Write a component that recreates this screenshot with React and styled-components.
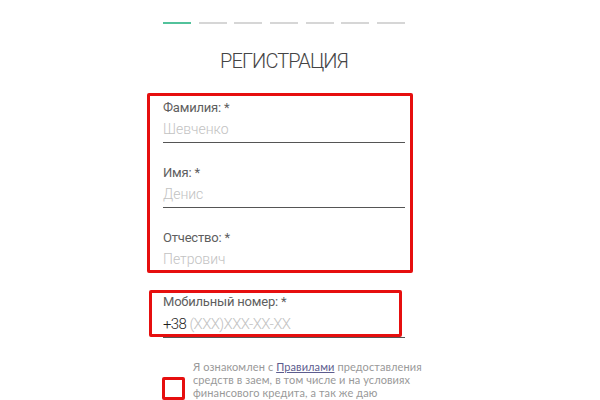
import styled, { createGlobalStyle } from "styled-components";

const GlobalStyle = createGlobalStyle`
    html, body {
        margin: 0;
        padding: 0;
        background: #ffffff;
    }
    body {
        font-family: Roboto, "Liberation Sans", sans-serif;
        overflow: hidden;
    }
`;

const Page = styled.div`
    width: 600px;
    height: 400px;
    overflow: hidden;
    background: #ffffff;
`;

const Column = styled.div`
    width: 242px;
    margin-left: 163px;
    padding-top: 22px;
`;

// progress of the registration steps
const Steps = styled.div`
    display: flex;
    justify-content: space-between;
`;

const Step = styled.span`
    width: 28px;
    height: 2px;
    background-color: ${props => props.$active ? '#52c29b' : '#d6d6d6'};
`;

const Title = styled.h1`
    margin: 25px 0 0;
    text-align: center;
    font-size: 20px;
    line-height: 24px;
    font-weight: 300;
    letter-spacing: -0.9px;
    color: #444444;
`;

const Group = styled.div`
    position: relative;
    display: flex;
    flex-direction: column;
    gap: 22px;
    margin-top: ${props => props.$top}px;
`;

// red annotation frame laid over a group of fields
const Frame = styled.div`
    position: absolute;
    inset: ${props => props.$inset};
    border: 3px solid #e60f0f;
    border-radius: 2px;
    pointer-events: none;
`;

const Field = styled.label`
    display: flex;
    flex-direction: column;
    gap: ${props => props.$gap || 3}px;
`;

const Label = styled.span`
    font-size: 13px;
    line-height: 16px;
    color: #5e5e5e;
    letter-spacing: -0.2px;
`;

const Input = styled.div`
    height: 23px;
    border-bottom: 1px solid #555555;
    font-size: ${props => props.$size || 14}px;
    line-height: 20px;
    letter-spacing: ${props => props.$spacing || 0}px;
    font-weight: 300;
    color: #1e1e1e;
    white-space: nowrap;
`;

const Placeholder = styled.span`
    color: #c2c2c2;
`;

const Agree = styled.div`
    display: flex;
    align-items: flex-start;
    gap: 8px;
    margin: 22px 0 0 -1px;
`;

const Check = styled.span`
    flex-shrink: 0;
    width: 17px;
    height: 17px;
    border: 3px solid #e60f0f;
    border-radius: 2px;
    background: #ffffff;
    margin-top: 17px;
`;

const AgreeText = styled.p`
    margin: 0;
    font-family: Lato, Roboto, sans-serif;
    font-size: 11px;
    line-height: 13px;
    letter-spacing: 0.1px;
    color: #999999;
    white-space: nowrap;
    a {
        color: #5c5c8e;
        text-decoration: underline;
    }
`;

export default function App() {
    return (
        <Page>
            <GlobalStyle />
            <Column>
                <Steps>
                    {[0, 1, 2, 3, 4, 5, 6].map(i => (
                        <Step key={i} $active={i === 0} />
                    ))}
                </Steps>

                <Title>РЕГИСТРАЦИЯ</Title>

                <Group $top={27}>
                    <Frame $inset="-7px -8px 0 -16px" />
                    <Field>
                        <Label>Фамилия: *</Label>
                        <Input><Placeholder>Шевченко</Placeholder></Input>
                    </Field>
                    <Field>
                        <Label>Имя: *</Label>
                        <Input><Placeholder>Денис</Placeholder></Input>
                    </Field>
                    <Field>
                        <Label>Отчество: *</Label>
                        <Input><Placeholder>Петрович</Placeholder></Input>
                    </Field>
                </Group>

                <Group $top={21}>
                    <Frame $inset="-4px 3px 1px -14px" />
                    <Field $gap={4}>
                        <Label>Мобильный номер: *</Label>
                        <Input $size={15} $spacing={-0.6}>+38 <Placeholder>(XXX)XXX-XX-XX</Placeholder></Input>
                    </Field>
                </Group>

                <Agree>
                    <Check />
                    <AgreeText>
                        Я ознакомлен с <a href="#rules">Правилами</a> предоставления<br />
                        средств в заем, в том числе и на условиях<br />
                        финансового кредита, а так же даю<br />
                        Согласие на обработку персональных данных
                    </AgreeText>
                </Agree>
            </Column>
        </Page>
    );
}
